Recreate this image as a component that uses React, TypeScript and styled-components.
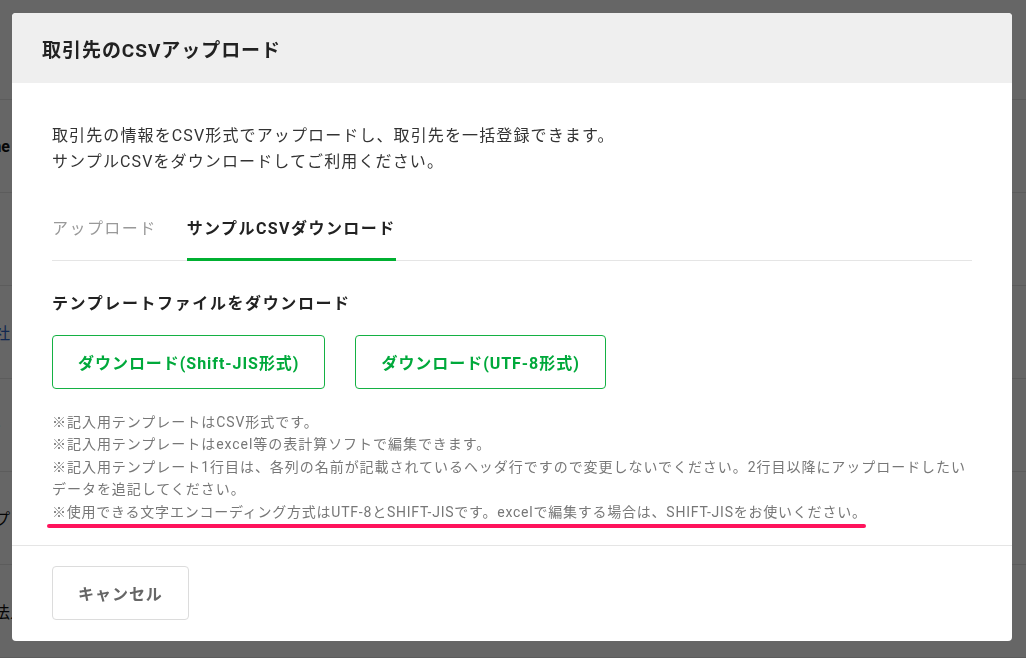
import React from "react"
import styled, { createGlobalStyle } from "styled-components"

const GlobalStyle = createGlobalStyle`
  html, body {
    margin: 0;
    padding: 0;
  }
  body {
    font-family: Roboto, "Noto Sans CJK JP", sans-serif;
    background: #fff;
    overflow: hidden;
  }
  * {
    box-sizing: border-box;
  }
`

// page lying behind the dialog
const Page = styled.div`
  height: 658px;
  padding-top: 7px;
`

const Row = styled.div`
  height: 93px;
  border-bottom: 1px solid #e6e6e6;
  display: flex;
  align-items: center;
`

const RowLabel = styled.div<{ $w: number; $link?: boolean; $bold?: boolean }>`
  width: ${p => p.$w}px;
  display: flex;
  justify-content: flex-end;
  overflow: hidden;
  white-space: nowrap;
  font-size: 16px;
  font-weight: ${p => (p.$bold ? 700 : 400)};
  color: ${p => (p.$link ? "#2a64c8" : "#111")};

  span {
    flex-shrink: 0;
  }
`

const Overlay = styled.div`
  position: fixed;
  inset: 0;
  background: rgba(0, 0, 0, 0.6);
  display: flex;
  align-items: center;
  justify-content: center;
  padding: 0 2px 4px 0;
`

const Modal = styled.div`
  width: 1000px;
  background: #fff;
  border-radius: 4px;
  overflow: hidden;
  color: #333;
  letter-spacing: 0.06em;
`

const Header = styled.header`
  height: 70px;
  background: #efefef;
  display: flex;
  align-items: center;
  padding: 0 30px;
`

const Title = styled.h2`
  margin: 0;
  font-size: 19px;
  font-weight: 700;
  color: #222;
`

const Body = styled.div`
  padding: 40px 40px 22px;
`

const Lead = styled.p`
  margin: 0 0 25px;
  font-size: 16px;
  line-height: 26px;
  letter-spacing: 0.07em;
`

const TabList = styled.div`
  display: flex;
  gap: 30px;
  border-bottom: 1px solid #e5e5e5;
`

const Tab = styled.button<{ $active?: boolean }>`
  appearance: none;
  background: none;
  border: 0;
  border-bottom: 3px solid ${p => (p.$active ? "#00b031" : "transparent")};
  margin: 0 0 -1px;
  padding: 16px 0;
  font: inherit;
  font-size: 16px;
  line-height: 26px;
  letter-spacing: 0.09em;
  font-weight: ${p => (p.$active ? 700 : 400)};
  color: ${p => (p.$active ? "#222" : "#999")};
  cursor: pointer;
`

const SectionTitle = styled.h3`
  margin: 30px 0 18px;
  font-size: 16px;
  line-height: 26px;
  font-weight: 700;
  letter-spacing: 0.1em;
  color: #222;
`

const ButtonRow = styled.div`
  display: flex;
  gap: 30px;
`

const Button = styled.button<{ $variant?: "green" | "plain" }>`
  height: 54px;
  padding: 0 25px;
  background: #fff;
  border: 1px solid ${p => (p.$variant === "green" ? "#14b143" : "#dcdcdc")};
  border-radius: 4px;
  font: inherit;
  font-size: 16px;
  font-weight: 700;
  letter-spacing: inherit;
  color: ${p => (p.$variant === "green" ? "#00a93b" : "#666")};
  cursor: pointer;
`

const Notes = styled.div`
  margin-top: 22px;
  font-size: 14px;
  line-height: 1.6;
  color: #777;
`

const Marked = styled.div`
  display: inline-block;
  position: relative;
  letter-spacing: 0.055em;

  &::after {
    content: "";
    position: absolute;
    left: -5px;
    right: 1px;
    bottom: -5px;
    height: 4px;
    border-radius: 2px;
    background: #ff135c;
  }
`

const Footer = styled.footer`
  border-top: 1px solid #e5e5e5;
  padding: 20px 40px 21px;
`

const backRows: { text?: string; w: number; link?: boolean; bold?: boolean }[] = [
  { w: 0 },
  { text: "Name", w: 10, bold: true },
  { w: 0 },
  { text: "会社", w: 10, link: true },
  { text: "・", w: 6 },
  { text: "アプリ", w: 26 },
  { text: "法人", w: 26 },
]

const NOTES = [
  "※記入用テンプレートはCSV形式です。",
  "※記入用テンプレートはexcel等の表計算ソフトで編集できます。",
  "※記入用テンプレート1行目は、各列の名前が記載されているヘッダ行ですので変更しないでください。2行目以降にアップロードしたいデータを追記してください。",
]

const App = () => {
  return (
    <>
      <GlobalStyle />
      <Page>
        {backRows.map((r, i) => (
          <Row key={i}>
            {r.text && (
              <RowLabel $w={r.w} $link={r.link} $bold={r.bold}>
                <span>{r.text}</span>
              </RowLabel>
            )}
          </Row>
        ))}
      </Page>
      <Overlay>
        <Modal role="dialog">
          <Header>
            <Title>取引先のCSVアップロード</Title>
          </Header>
          <Body>
            <Lead>
              取引先の情報をCSV形式でアップロードし、取引先を一括登録できます。
              <br />
              サンプルCSVをダウンロードしてご利用ください。
            </Lead>
            <TabList>
              <Tab>アップロード</Tab>
              <Tab $active>サンプルCSVダウンロード</Tab>
            </TabList>
            <SectionTitle>テンプレートファイルをダウンロード</SectionTitle>
            <ButtonRow>
              <Button $variant="green">ダウンロード(Shift-JIS形式)</Button>
              <Button $variant="green">ダウンロード(UTF-8形式)</Button>
            </ButtonRow>
            <Notes>
              {NOTES.map(n => (
                <div key={n}>{n}</div>
              ))}
              <Marked>
                ※使用できる文字エンコーディング方式はUTF-8とSHIFT-JISです。excelで編集する場合は、SHIFT-JISをお使いください。
              </Marked>
            </Notes>
          </Body>
          <Footer>
            <Button $variant="plain">キャンセル</Button>
          </Footer>
        </Modal>
      </Overlay>
    </>
  )
}

export default App
